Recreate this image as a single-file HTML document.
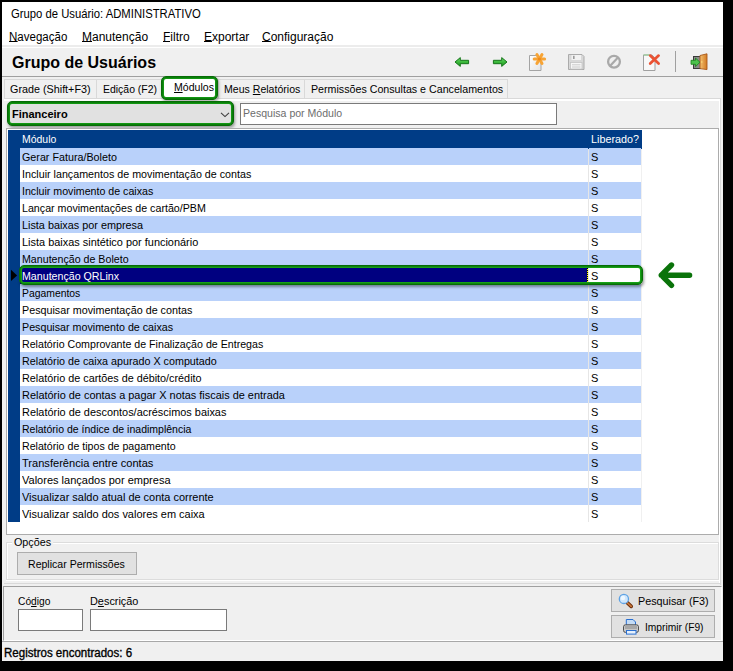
<!DOCTYPE html>
<html><head><meta charset="utf-8">
<style>
*{box-sizing:border-box;margin:0;padding:0}
html,body{width:733px;height:671px;overflow:hidden;background:#000}
body{position:relative;font-family:"Liberation Sans",sans-serif;color:#000}
.a{position:absolute}
.t12{font-size:12px;line-height:14px;white-space:pre;transform-origin:0 0}
.t11{font-size:11px;line-height:13px;white-space:pre;transform-origin:0 0}
u{text-decoration:none;position:relative}
u::after{content:"";position:absolute;left:0;right:0;top:11px;height:1px;background:#000}
.t11 u::after{top:11px}
.row{position:absolute;left:20px;width:568px;height:17px}
.row .c1{position:absolute;left:2px;top:3px;transform-origin:0 0;font-size:11px;line-height:13px;white-space:pre}
.cell2{position:absolute;left:589px;width:52px;height:17px;font-size:11px;line-height:13px;padding:3px 0 0 2px;color:#000}
</style></head><body>
<!-- window -->
<div class="a" style="left:2px;top:2px;width:721px;height:659px;background:#f0f0f0"></div>
<!-- title + menu white -->
<div class="a" style="left:2px;top:2px;width:721px;height:43px;background:#fff"></div>
<div class="a t12" style="left:11px;top:7px;transform:scaleX(0.94)">Grupo de Usuário: ADMINISTRATIVO</div>
<div class="a t12" style="left:9px;top:30px;transform:scaleX(0.96)"><u>N</u>avegação</div>
<div class="a t12" style="left:82px;top:30px"><u>M</u>anutenção</div>
<div class="a t12" style="left:163px;top:30px"><u>F</u>iltro</div>
<div class="a t12" style="left:204px;top:30px"><u>E</u>xportar</div>
<div class="a t12" style="left:262px;top:30px"><u>C</u>onfiguração</div>
<div class="a" style="left:2px;top:45px;width:721px;height:2px;background:#ececec"></div>
<div class="a" style="left:2px;top:47px;width:721px;height:1px;background:#fff"></div>
<!-- toolbar -->
<div class="a" style="left:12px;top:54px;font-size:16px;font-weight:bold;line-height:18px;white-space:pre">Grupo de Usuários</div>
<div class="a" style="left:2px;top:76px;width:721px;height:1px;background:#a0a0a0"></div>

<svg class="a" style="left:452px;top:54px" width="60" height="16" viewBox="452 54 60 16">
 <defs><linearGradient id="ga" x1="0" y1="0" x2="0" y2="1"><stop offset="0" stop-color="#6fdc6f"/><stop offset="0.5" stop-color="#3cba3c"/><stop offset="1" stop-color="#1f941f"/></linearGradient></defs>
 <path d="M455 62 L460.3 57.6 V60.3 H468.6 V63.7 H460.3 V66.4 Z" fill="url(#ga)" stroke="#16751a" stroke-width="1" stroke-linejoin="round"/>
 <path d="M507 62 L501.7 57.6 V60.3 H493.4 V63.7 H501.7 V66.4 Z" fill="url(#ga)" stroke="#16751a" stroke-width="1" stroke-linejoin="round"/>
</svg>
<svg class="a" style="left:526px;top:50px" width="24" height="24" viewBox="526 50 24 24">
 <defs><linearGradient id="gd" x1="0" y1="0" x2="1" y2="1"><stop offset="0" stop-color="#ffffff"/><stop offset="1" stop-color="#e4e4e4"/></linearGradient></defs>
 <path d="M529.5 55.5 H538 L541 58.5 V70.5 H529.5 Z" fill="url(#gd)" stroke="#a4a4a4" stroke-width="1"/>
 <g stroke="#f7a435" stroke-width="3" stroke-linecap="round">
  <path d="M534.2 59 H544.6"/><path d="M536.9 54.5 L542 63.5"/><path d="M542 54.5 L536.9 63.5"/>
 </g>
 <circle cx="539.4" cy="59" r="1.6" fill="#ee8a1c"/>
</svg>
<svg class="a" style="left:566px;top:52px" width="20" height="20" viewBox="566 52 20 20">
 <path d="M568.5 54.5 H582 L584 56.5 V69.5 H568.5 Z" fill="#d8d8d8" stroke="#ababab" stroke-width="1"/>
 <rect x="571.5" y="55" width="9.5" height="5" fill="#f2f2f2"/>
 <rect x="573" y="55.8" width="1.6" height="3.2" fill="#9c9c9c"/>
 <rect x="570.5" y="62.5" width="11.5" height="6.5" fill="#f6f6f6" stroke="#c4c4c4" stroke-width="0.8"/>
 <path d="M572 64.8 H580.5 M572 67 H580.5" stroke="#c6c6c6" stroke-width="0.9"/>
</svg>
<svg class="a" style="left:605px;top:53px" width="18" height="18" viewBox="605 53 18 18">
 <circle cx="614" cy="61.7" r="5.9" fill="none" stroke="#a9a9a9" stroke-width="2.3"/>
 <path d="M610 66 L618 57.6" stroke="#a9a9a9" stroke-width="2.2"/>
</svg>
<svg class="a" style="left:641px;top:52px" width="22" height="20" viewBox="641 52 22 20">
 <path d="M643.5 55 H652 L655 58 V70.5 H643.5 Z" fill="#f8f8f8" stroke="#a0a0a0" stroke-width="1"/>
 <path d="M643.5 55 H650" stroke="#8fd08f" stroke-width="1"/>
 <g stroke="#ea5233" stroke-width="2.7" stroke-linecap="round">
  <path d="M650.2 55.6 L658.6 63.6"/><path d="M658.6 55.6 L650.2 63.6"/>
 </g>
</svg>
<div class="a" style="left:675px;top:51px;width:1px;height:21px;background:#a0a0a0"></div>
<svg class="a" style="left:689px;top:52px" width="20" height="19" viewBox="689 52 20 19">
 <rect x="693.5" y="56.5" width="7" height="12" fill="#8a8a8a" stroke="#3a3a3a" stroke-width="1"/>
 <defs><linearGradient id="gdoor" x1="0" y1="0" x2="1" y2="0"><stop offset="0" stop-color="#f4c070"/><stop offset="1" stop-color="#d27a22"/></linearGradient></defs>
 <path d="M700 55.5 L707 53.8 V69.6 L700 68.6 Z" fill="url(#gdoor)" stroke="#a8581a" stroke-width="0.9"/>
 <circle cx="701.8" cy="62" r="0.8" fill="#ffe27a"/>
 <path d="M691 60.3 H695.5 V58 L700 62.3 L695.5 66.6 V64.3 H691 Z" fill="#4cc24c" stroke="#1b7d1b" stroke-width="0.8"/>
</svg>

<!-- tabs -->
<div class="a" style="left:4px;top:79px;width:504px;height:20px;border:1px solid #d9d9d9;border-bottom:none;background:#f0f0f0"></div>
<div class="a" style="left:96px;top:80px;width:1px;height:18px;background:#d9d9d9"></div>
<div class="a" style="left:162px;top:80px;width:1px;height:18px;background:#d9d9d9"></div>
<div class="a" style="left:218px;top:80px;width:1px;height:18px;background:#d9d9d9"></div>
<div class="a" style="left:304px;top:80px;width:1px;height:18px;background:#d9d9d9"></div>
<div class="a t11" style="left:10px;top:83px;transform:scaleX(0.98)">Grade (Shift+F3)</div>
<div class="a t11" style="left:103px;top:83px;transform:scaleX(0.95)">Edição (F2)</div>
<div class="a t11" style="left:224px;top:83px;transform:scaleX(0.96)">Meus <u>R</u>elatórios</div>
<div class="a t11" style="left:311px;top:83px;transform:scaleX(0.97)">Permissões Consultas e Cancelamentos</div>
<!-- tab page -->
<div class="a" style="left:4px;top:98px;width:717px;height:1px;background:#d9d9d9"></div>
<div class="a" style="left:4px;top:99px;width:717px;height:2px;background:#fff"></div>
<div class="a" style="left:720px;top:99px;width:1px;height:486px;background:#d9d9d9"></div>
<div class="a" style="left:719px;top:99px;width:1px;height:484px;background:#fff"></div>
<div class="a" style="left:4px;top:583px;width:717px;height:1px;background:#d9d9d9"></div>
<!-- selected tab -->
<div class="a" style="left:161px;top:76px;width:57px;height:24px;background:#fff;border:1px solid #066c06;border-radius:5px;box-shadow:inset 0 0 0 1px #0b7d0b,inset 0 0 0 2px #129612,1px 2px 3px rgba(0,0,0,.3)"></div>
<div class="a t11" style="left:174px;top:81px;transform:scaleX(0.96)"><u>M</u>ódulos</div>
<!-- combo -->
<div class="a" style="left:7px;top:101px;width:227px;height:25px;background:#e1e1e1;border:1px solid #066c06;border-radius:5px;box-shadow:inset 0 0 0 1px #0b7d0b,inset 0 0 0 2px #129612,1px 2px 3px rgba(0,0,0,.35)"></div>
<div class="a t11" style="left:12px;top:108px;font-weight:bold">Financeiro</div>
<svg class="a" style="left:219px;top:110px" width="12" height="9" viewBox="219 110 12 9"><path d="M221 112.8 L225 116.6 L229 112.8" fill="none" stroke="#3c3c3c" stroke-width="1.1"/></svg>
<!-- search -->
<div class="a" style="left:240px;top:103px;width:317px;height:22px;background:#fff;border:1px solid #7a7a7a"></div>
<div class="a t11" style="left:243px;top:107px;color:#6d6d6d;transform:scaleX(0.96)">Pesquisa por Módulo</div>
<!-- grid -->
<div class="a" style="left:6px;top:128px;width:713px;height:407px;background:#fff;border:1px solid #acacac"></div>
<div class="a" style="left:8px;top:130px;width:634px;height:392px;background:#003c86"></div>
<div class="a t11" style="left:22px;top:133px;color:#fff;transform:scaleX(0.95)">Módulo</div>
<div class="a t11" style="left:591px;top:133px;color:#fff;transform:scaleX(0.98)">Liberado?</div>
<div class="row" style="top:148px;background:#b9d1fa;color:#000"><div class="c1" style="transform:scaleX(0.976)">Gerar Fatura/Boleto</div></div><div class="cell2" style="top:148px;background:#b9d1fa">S</div>
<div class="row" style="top:165px;background:#fff;color:#000"><div class="c1" style="transform:scaleX(0.974)">Incluir lançamentos de movimentação de contas</div></div><div class="cell2" style="top:165px;background:#fff">S</div>
<div class="row" style="top:182px;background:#b9d1fa;color:#000"><div class="c1" style="transform:scaleX(0.967)">Incluir movimento de caixas</div></div><div class="cell2" style="top:182px;background:#b9d1fa">S</div>
<div class="row" style="top:199px;background:#fff;color:#000"><div class="c1" style="transform:scaleX(0.97)">Lançar movimentações de cartão/PBM</div></div><div class="cell2" style="top:199px;background:#fff">S</div>
<div class="row" style="top:216px;background:#b9d1fa;color:#000"><div class="c1" style="transform:scaleX(0.985)">Lista baixas por empresa</div></div><div class="cell2" style="top:216px;background:#b9d1fa">S</div>
<div class="row" style="top:233px;background:#fff;color:#000"><div class="c1" style="transform:scaleX(0.994)">Lista baixas sintético por funcionário</div></div><div class="cell2" style="top:233px;background:#fff">S</div>
<div class="row" style="top:250px;background:#b9d1fa;color:#000"><div class="c1" style="transform:scaleX(0.968)">Manutenção de Boleto</div></div><div class="cell2" style="top:250px;background:#b9d1fa">S</div>
<div class="row" style="top:267px;background:#000080;color:#fff"><div class="c1" style="transform:scaleX(0.968)">Manutenção QRLinx</div></div><div class="cell2" style="top:267px;background:#fff">S</div>
<div class="row" style="top:284px;background:#b9d1fa;color:#000"><div class="c1" style="transform:scaleX(0.944)">Pagamentos</div></div><div class="cell2" style="top:284px;background:#b9d1fa">S</div>
<div class="row" style="top:301px;background:#fff;color:#000"><div class="c1" style="transform:scaleX(0.977)">Pesquisar movimentação de contas</div></div><div class="cell2" style="top:301px;background:#fff">S</div>
<div class="row" style="top:318px;background:#b9d1fa;color:#000"><div class="c1" style="transform:scaleX(0.973)">Pesquisar movimento de caixas</div></div><div class="cell2" style="top:318px;background:#b9d1fa">S</div>
<div class="row" style="top:335px;background:#fff;color:#000"><div class="c1" style="transform:scaleX(0.967)">Relatório Comprovante de Finalização de Entregas</div></div><div class="cell2" style="top:335px;background:#fff">S</div>
<div class="row" style="top:352px;background:#b9d1fa;color:#000"><div class="c1" style="transform:scaleX(0.977)">Relatório de caixa apurado X computado</div></div><div class="cell2" style="top:352px;background:#b9d1fa">S</div>
<div class="row" style="top:369px;background:#fff;color:#000"><div class="c1" style="transform:scaleX(0.982)">Relatório de cartões de débito/crédito</div></div><div class="cell2" style="top:369px;background:#fff">S</div>
<div class="row" style="top:386px;background:#b9d1fa;color:#000"><div class="c1" style="transform:scaleX(0.993)">Relatório de contas a pagar X notas fiscais de entrada</div></div><div class="cell2" style="top:386px;background:#b9d1fa">S</div>
<div class="row" style="top:403px;background:#fff;color:#000"><div class="c1" style="transform:scaleX(0.992)">Relatório de descontos/acréscimos baixas</div></div><div class="cell2" style="top:403px;background:#fff">S</div>
<div class="row" style="top:420px;background:#b9d1fa;color:#000"><div class="c1" style="transform:scaleX(0.955)">Relatório de índice de inadimplência</div></div><div class="cell2" style="top:420px;background:#b9d1fa">S</div>
<div class="row" style="top:437px;background:#fff;color:#000"><div class="c1" style="transform:scaleX(0.966)">Relatório de tipos de pagamento</div></div><div class="cell2" style="top:437px;background:#fff">S</div>
<div class="row" style="top:454px;background:#b9d1fa;color:#000"><div class="c1" style="transform:scaleX(1.007)">Transferência entre contas</div></div><div class="cell2" style="top:454px;background:#b9d1fa">S</div>
<div class="row" style="top:471px;background:#fff;color:#000"><div class="c1" style="transform:scaleX(1.001)">Valores lançados por empresa</div></div><div class="cell2" style="top:471px;background:#fff">S</div>
<div class="row" style="top:488px;background:#b9d1fa;color:#000"><div class="c1" style="transform:scaleX(0.996)">Visualizar saldo atual de conta corrente</div></div><div class="cell2" style="top:488px;background:#b9d1fa">S</div>
<div class="row" style="top:505px;background:#fff;color:#000"><div class="c1" style="transform:scaleX(0.997)">Visualizar saldo dos valores em caixa</div></div><div class="cell2" style="top:505px;background:#fff">S</div>
<div class="a" style="left:588px;top:148px;width:1px;height:374px;background:#e6e6e6"></div>
<div class="a" style="left:641px;top:148px;width:1px;height:374px;background:#f0f0f0"></div>
<div class="a" style="left:641px;top:147px;width:1px;height:2px;background:#003c86"></div>
<div class="a" style="left:588px;top:147px;width:1px;height:2px;background:#003c86"></div>
<!-- indicator -->
<svg class="a" style="left:8px;top:266px" width="12" height="18" viewBox="8 266 12 18"><path d="M11 269.8 L17.1 275.4 L11 281 Z" fill="#000"/></svg>
<!-- selected annotation -->
<div class="a" style="left:587px;top:268px;width:1px;height:14px;background:repeating-linear-gradient(#000 0 1px,#ff0 1px 2px)"></div>
<div class="a" style="left:19px;top:265px;width:624px;height:20px;border:1px solid #066c06;border-radius:5px;box-shadow:inset 0 0 0 1px #0e850e,inset 0 0 0 2px #17a017,1px 2px 3px rgba(0,0,0,.4)"></div>
<svg class="a" style="left:650px;top:255px" width="50" height="40" viewBox="650 255 50 40"><path d="M689.6 275.2 H661.3 M671.5 265 L661.3 275.2 L671.5 285.4" fill="none" stroke="#0a730a" stroke-width="5.4" stroke-linecap="round" stroke-linejoin="round"/></svg>
<!-- groupbox -->
<div class="a" style="left:6px;top:542px;width:713px;height:38px;border:1px solid #dcdcdc;box-shadow:inset 1px 1px 0 #fff,0 1px 0 #fff"></div>
<div class="a t11" style="left:12px;top:536px;background:#f0f0f0;padding:0 2px;transform:scaleX(0.98)">Opções</div>
<div class="a" style="left:17px;top:552px;width:120px;height:23px;background:#e1e1e1;border:1px solid #adadad"></div>
<div class="a t11" style="left:28px;top:558px;transform:scaleX(0.96)">Replicar Permissões</div>
<!-- bottom panel -->
<div class="a" style="left:3px;top:586px;width:719px;height:55px;border-top:1px solid #a0a0a0;border-left:1px solid #a0a0a0;border-right:1px solid #fff;border-bottom:1px solid #fff"></div>
<div class="a" style="left:2px;top:641px;width:721px;height:1px;background:#a8a8a8"></div>
<div class="a t11" style="left:18px;top:595px;transform:scaleX(0.93)">Có<u>d</u>igo</div>
<div class="a t11" style="left:90px;top:595px;transform:scaleX(0.99)">D<u>e</u>scrição</div>
<div class="a" style="left:18px;top:609px;width:65px;height:22px;background:#fff;border:1px solid #7a7a7a"></div>
<div class="a" style="left:90px;top:609px;width:137px;height:22px;background:#fff;border:1px solid #7a7a7a"></div>
<div class="a" style="left:611px;top:589px;width:104px;height:23px;background:#e1e1e1;border:1px solid #adadad"></div>
<div class="a t11" style="left:638px;top:595px;transform:scaleX(0.98)">Pesquisar (F3)</div>
<div class="a" style="left:611px;top:615px;width:104px;height:23px;background:#e1e1e1;border:1px solid #adadad"></div>
<div class="a t11" style="left:645px;top:621px;transform:scaleX(0.93)">Imprimir (F9)</div>
<svg class="a" style="left:616px;top:592px" width="18" height="18" viewBox="616 592 18 18">
 <path d="M627.2 602.6 L631.2 606.4" stroke="#6a2a08" stroke-width="3.6" stroke-linecap="round"/>
 <path d="M627.2 602.6 L631.2 606.4" stroke="#c8783a" stroke-width="1.8" stroke-linecap="round"/>
 <circle cx="623.9" cy="598.9" r="4.6" fill="#cfe6fc" stroke="#5ea2e4" stroke-width="1.3"/>
 <circle cx="623" cy="598" r="2.2" fill="#eef7ff"/>
</svg>
<svg class="a" style="left:621px;top:617px" width="20" height="19" viewBox="621 617 20 19">
 <path d="M626.3 619.5 H633 L635.5 622 V626 H626.3 Z" fill="#c4dcf6" stroke="#2a6fd0" stroke-width="1"/>
 <rect x="623.5" y="624.8" width="15" height="7.6" rx="2" fill="#c8c8c8" stroke="#505050" stroke-width="1"/>
 <rect x="625" y="626" width="12" height="3" fill="#a8a8a8"/>
 <rect x="626.5" y="630.5" width="9.5" height="3.6" fill="#e6f0fb" stroke="#2a6fd0" stroke-width="1"/>
</svg>
<!-- status -->
<div class="a t12" style="left:4px;top:646px;transform:scaleX(0.96);-webkit-text-stroke:0.35px #000">Registros encontrados: 6</div>
</body></html>
